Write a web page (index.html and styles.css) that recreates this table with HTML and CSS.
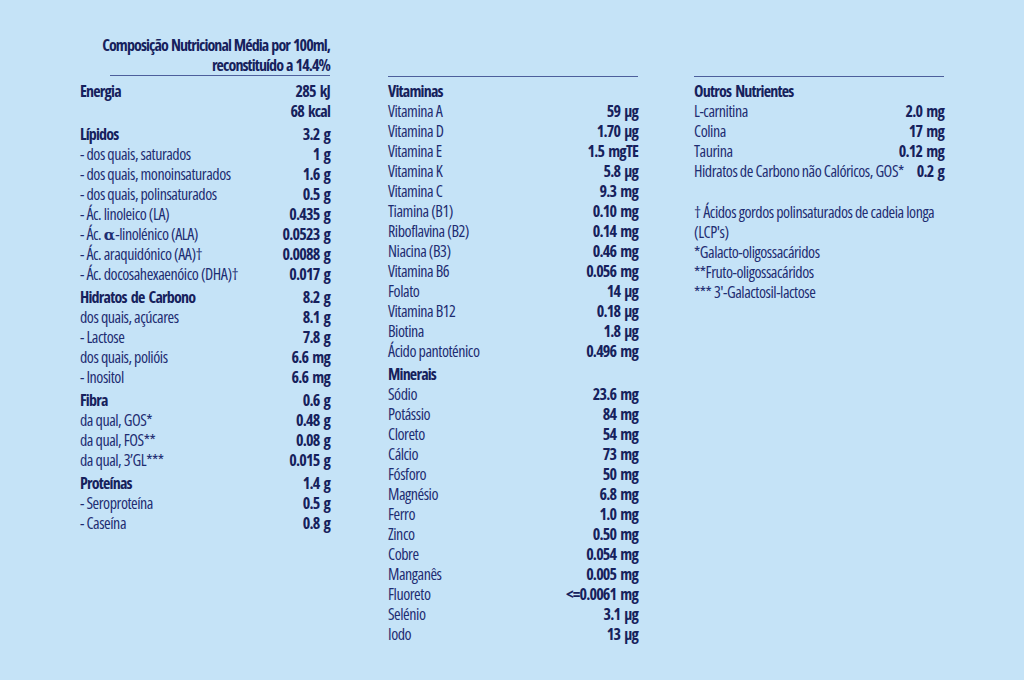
FILE: index.html
```html
<!DOCTYPE html>
<html lang="pt">
<head>
<meta charset="utf-8">
<title>Composição Nutricional</title>
<link rel="stylesheet" href="styles.css">
</head>
<body>
<main class="page">
  <section class="col">
    <header class="head">
      <div>Composição Nutricional Média por 100ml,</div>
      <div>reconstituído a 14.4%</div>
    </header>
    <div class="rule rule-short"></div>
    <div class="body">
      <div class="group">
        <div class="row b"><span>Energia</span><span>285 kJ</span></div>
        <div class="row"><span></span><span class="v">68 kcal</span></div>
      </div>
      <div class="group">
        <div class="row b"><span>Lípidos</span><span>3.2 g</span></div>
        <div class="row"><span>- dos quais, saturados</span><span class="v">1 g</span></div>
        <div class="row"><span>- dos quais, monoinsaturados</span><span class="v">1.6 g</span></div>
        <div class="row"><span>- dos quais, polinsaturados</span><span class="v">0.5 g</span></div>
        <div class="row"><span>- Ác. linoleico (LA)</span><span class="v">0.435 g</span></div>
        <div class="row"><span>- Ác. <span class="alpha">α</span>-linolénico (ALA)</span><span class="v">0.0523 g</span></div>
        <div class="row"><span>- Ác. araquidónico (AA)†</span><span class="v">0.0088 g</span></div>
        <div class="row"><span>- Ác. docosahexaenóico (DHA)†</span><span class="v">0.017 g</span></div>
      </div>
      <div class="group">
        <div class="row b"><span>Hidratos de Carbono</span><span>8.2 g</span></div>
        <div class="row"><span>dos quais, açúcares</span><span class="v">8.1 g</span></div>
        <div class="row"><span>- Lactose</span><span class="v">7.8 g</span></div>
        <div class="row"><span>dos quais, polióis</span><span class="v">6.6 mg</span></div>
        <div class="row"><span>- Inositol</span><span class="v">6.6 mg</span></div>
      </div>
      <div class="group">
        <div class="row b"><span>Fibra</span><span>0.6 g</span></div>
        <div class="row"><span>da qual, GOS*</span><span class="v">0.48 g</span></div>
        <div class="row"><span>da qual, FOS**</span><span class="v">0.08 g</span></div>
        <div class="row"><span>da qual, 3’GL***</span><span class="v">0.015 g</span></div>
      </div>
      <div class="group">
        <div class="row b"><span>Proteínas</span><span>1.4 g</span></div>
        <div class="row"><span>- Seroproteína</span><span class="v">0.5 g</span></div>
        <div class="row"><span>- Caseína</span><span class="v">0.8 g</span></div>
      </div>
    </div>
  </section>

  <section class="col col-top">
    <div class="rule"></div>
    <div class="body">
      <div class="group">
        <div class="row b"><span>Vitaminas</span><span></span></div>
        <div class="row"><span>Vitamina A</span><span class="v">59 μg</span></div>
        <div class="row"><span>Vitamina D</span><span class="v">1.70 μg</span></div>
        <div class="row"><span>Vitamina E</span><span class="v">1.5 mgTE</span></div>
        <div class="row"><span>Vitamina K</span><span class="v">5.8 μg</span></div>
        <div class="row"><span>Vitamina C</span><span class="v">9.3 mg</span></div>
        <div class="row"><span>Tiamina (B1)</span><span class="v">0.10 mg</span></div>
        <div class="row"><span>Riboflavina (B2)</span><span class="v">0.14 mg</span></div>
        <div class="row"><span>Niacina (B3)</span><span class="v">0.46 mg</span></div>
        <div class="row"><span>Vitamina B6</span><span class="v">0.056 mg</span></div>
        <div class="row"><span>Folato</span><span class="v">14 μg</span></div>
        <div class="row"><span>Vitamina B12</span><span class="v">0.18 μg</span></div>
        <div class="row"><span>Biotina</span><span class="v">1.8 μg</span></div>
        <div class="row"><span>Ácido pantoténico</span><span class="v">0.496 mg</span></div>
      </div>
      <div class="group">
        <div class="row b"><span>Minerais</span><span></span></div>
        <div class="row"><span>Sódio</span><span class="v">23.6 mg</span></div>
        <div class="row"><span>Potássio</span><span class="v">84 mg</span></div>
        <div class="row"><span>Cloreto</span><span class="v">54 mg</span></div>
        <div class="row"><span>Cálcio</span><span class="v">73 mg</span></div>
        <div class="row"><span>Fósforo</span><span class="v">50 mg</span></div>
        <div class="row"><span>Magnésio</span><span class="v">6.8 mg</span></div>
        <div class="row"><span>Ferro</span><span class="v">1.0 mg</span></div>
        <div class="row"><span>Zinco</span><span class="v">0.50 mg</span></div>
        <div class="row"><span>Cobre</span><span class="v">0.054 mg</span></div>
        <div class="row"><span>Manganês</span><span class="v">0.005 mg</span></div>
        <div class="row"><span>Fluoreto</span><span class="v">&lt;=0.0061 mg</span></div>
        <div class="row"><span>Selénio</span><span class="v">3.1 μg</span></div>
        <div class="row"><span>Iodo</span><span class="v">13 μg</span></div>
      </div>
    </div>
  </section>

  <section class="col col-top col-last">
    <div class="rule"></div>
    <div class="body">
      <div class="group">
        <div class="row b"><span>Outros Nutrientes</span><span></span></div>
        <div class="row"><span>L-carnitina</span><span class="v">2.0 mg</span></div>
        <div class="row"><span>Colina</span><span class="v">17 mg</span></div>
        <div class="row"><span>Taurina</span><span class="v">0.12 mg</span></div>
        <div class="row"><span>Hidratos de Carbono não Calóricos, GOS*</span><span class="v">0.2 g</span></div>
      </div>
      <div class="notes">
        <p>† Ácidos gordos polinsaturados de cadeia longa (LCP's)</p>
        <p>*Galacto-oligossacáridos</p>
        <p>**Fruto-oligossacáridos</p>
        <p>*** 3'-Galactosil-lactose</p>
      </div>
    </div>
  </section>
</main>
</body>
</html>
```
FILE: styles.css
```css
html, body {
  margin: 0;
  padding: 0;
}
body {
  background: #c5e3f7;
  color: #1e2d72;
  font-family: "Open Sans", "Liberation Sans", sans-serif;
  font-stretch: 75%;
  font-size: 16px;
  letter-spacing: -0.45px;
  line-height: 20px;
  width: 1024px;
  height: 680px;
  overflow: hidden;
}
.page {
  display: flex;
  gap: 58px;
  padding: 35px 0 0 80px;
}
.col {
  width: 250px;
  display: flex;
  flex-direction: column;
}
.col-last {
  margin-left: -2px;
}
.col-top {
  padding-top: 40px;
}
.head {
  text-align: right;
  font-weight: 700;
  letter-spacing: -0.9px;
  word-spacing: 1px;
  color: #16215c;
}
.rule {
  height: 1px;
  border-top: 1px solid #4d5f9c;
}
.rule-short {
  margin-left: 30px;
}
.col-top .rule {
  height: 0;
  margin-top: 1px;
}
.body {
  padding-top: 4px;
}
.group + .group {
  margin-top: 3px;
}
.row {
  display: flex;
  justify-content: space-between;
  white-space: nowrap;
  height: 20px;
}
.b,
.v {
  font-weight: 700;
  letter-spacing: -0.8px;
  word-spacing: 2px;
  color: #16215c;
}
.alpha {
  font-family: "DejaVu Serif", serif;
  font-stretch: normal;
  font-weight: 700;
  font-size: 15px;
  letter-spacing: 0;
}
.notes {
  margin-top: 21px;
}
.notes p {
  margin: 0;
}
```
